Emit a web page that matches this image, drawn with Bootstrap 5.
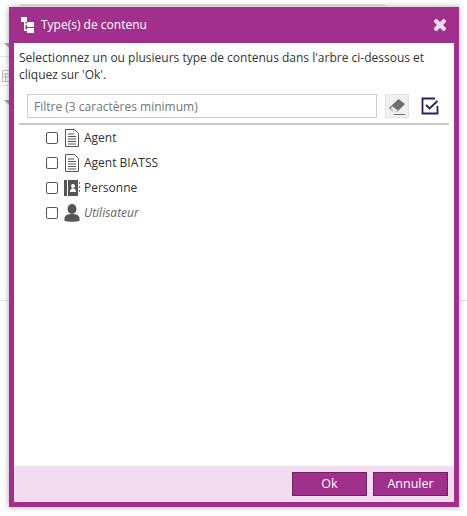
<!DOCTYPE html>
<html lang="fr">
<head>
  <meta charset="UTF-8" />
  <meta name="viewport" content="width=device-width, initial-scale=1.0" />
  <title>Type(s) de contenu</title>
  <link href="https://cdn.jsdelivr.net/npm/bootstrap@5.3.0/dist/css/bootstrap.min.css" rel="stylesheet" />
  <style>
    html, body { height: 100%; overflow: hidden; }
    body { background: #fff; font-family: "Open Sans", sans-serif; font-size: 12px; color: #333; position: relative; }
    .bg-line { position: absolute; background: #e8e8e8; }
    .bg-line.top { left: 20px; top: 4px; width: 365px; height: 2px; }
    .bg-line.mid-l { left: 0; top: 300px; width: 9px; height: 1px; background: #dfe6ea; }
    .bg-line.mid-r { right: 0; top: 300px; width: 8px; height: 1px; background: #dfe6ea; }
    .bg-line.row-a { left: 0; top: 56px; width: 9px; height: 1px; }
    .bg-line.row-b { left: 0; top: 85px; width: 9px; height: 1px; }
    .bg-tri { position: absolute; left: 4px; width: 0; height: 0; border-left: 5px solid transparent; border-top: 5px solid #aaa; }
    .bg-cal { position: absolute; left: 2px; top: 68px; }
    .dlg {
      position: absolute; left: 9px; top: 7px; width: 450px; height: 500px;
      background: #a1308c; box-shadow: 0 0 6px rgba(0,0,0,.35);
      padding: 0 5px 5px; display: flex; flex-direction: column;
    }
    .dlg-head { height: 36px; color: #fff; font-size: 12px; gap: 7px; padding-left: 7px; flex: none; }
    .dlg-close { margin-left: auto; margin-right: 8px; line-height: 0; }
    .dlg-body { flex: 1; background: #fff; padding: 6px 5px 0; min-height: 0; }
    .dlg-msg { line-height: 17px; margin: 0 0 11px; color: #333; font-size: 12px; padding-right: 10px; }
    .filter-row { padding: 0 0 5px 8px; border-bottom: 2px solid #c8c8c8; gap: 8px; }
    .filter-input { width: 350px; height: 24px; border: 1px solid #ccc; border-radius: 0; padding: 0 6px; font-size: 12px; box-shadow: none; }
    .filter-input::placeholder { color: #757575; opacity: 1; }
    .tool-btn { width: 24px; height: 24px; background: #f0f0f0; border: 1px solid #e3e3e3; border-radius: 0; padding: 0; }
    .tool-plain { width: 24px; height: 24px; margin-left: 1px; }
    .tree { list-style: none; margin: 0; padding: 0 0 0 27px; }
    .tree li { height: 25px; gap: 6px; font-size: 12px; }
    .tree-chk { width: 12px; height: 12px; border: 1.5px solid #555; border-radius: 2px; flex: none; margin: 0; appearance: none; background: #fff; }
    .tree-ic { width: 16px; height: 18px; flex: none; margin-right: -2px; }
    .tree-off { font-style: italic; color: #666; }
    .dlg-foot { height: 36px; background: #f4dcf0; flex: none; gap: 6px; padding-right: 6px; }
    .foot-btn { width: 75px; height: 24px; background: #a1308c; border: 1px solid #6f2260; border-radius: 0; color: #fff; font-size: 12.5px; padding: 0; }
  </style>
</head>
<body>
  <div class="bg-line top"></div>
  <div class="bg-line row-a"></div>
  <div class="bg-line row-b"></div>
  <div class="bg-line mid-l"></div>
  <div class="bg-line mid-r"></div>
  <div class="bg-tri" style="top:43px"></div>
  <div class="bg-tri" style="top:100px"></div>
  <svg class="bg-cal" width="8" height="14" viewBox="0 0 8 14"><path d="M.5 2.5h7v11h-7zM.5 6h7M.5 9h7M3.5 6v7.5" fill="none" stroke="#bbb"/></svg>

  <div class="dlg" role="dialog">
    <div class="dlg-head d-flex align-items-center">
      <svg width="13" height="17" viewBox="0 0 13 17"><path d="M0 0h6v5H0zM3 5h1.500v9H3zM4 6.500h2V8H4zM4 12.500h2V14H4zM6 5h7v5H6zM6 11h7v5H6z" fill="#fff"/></svg>
      <span>Type(s) de contenu</span>
      <svg class="dlg-close" width="12" height="12" viewBox="0 0 12 12"><path d="M2.200 2.200l7.600 7.600M9.800 2.200l-7.600 7.600" stroke="#f2dcee" stroke-width="4.200" stroke-linecap="round"/></svg>
    </div>
    <div class="dlg-body">
      <p class="dlg-msg">Selectionnez un ou plusieurs type de contenus dans l'arbre ci-dessous et cliquez sur 'Ok'.</p>
      <div class="filter-row d-flex align-items-center">
        <input class="form-control filter-input" type="text" placeholder="Filtre (3 caractères minimum)" />
        <button class="btn tool-btn d-flex align-items-center justify-content-center" type="button" title="Effacer">
          <svg width="18" height="19" viewBox="0 0 18 19"><path d="M1 11L10.500 2 17 7l-8 8H5z" fill="#707070"/><path d="M2.500 11.200L4.500 9.300 10 13.500 8.500 15H5z" fill="#e4e4e4"/><path d="M6 17.500h11" stroke="#707070"/></svg>
        </button>
        <button class="btn tool-plain p-0 d-flex align-items-center justify-content-center border-0" type="button" title="Tout cocher">
          <svg width="18" height="18" viewBox="0 0 18 18"><path d="M14 1.500H1.500v15h15V9" fill="none" stroke="#2b1a66" stroke-width="1.800"/><path d="M5 8l3.500 3.500L16.500 4" fill="none" stroke="#2b1a66" stroke-width="1.800"/></svg>
        </button>
      </div>
      <ul class="tree">
        <li class="d-flex align-items-center">
          <input class="tree-chk" type="checkbox" />
          <svg class="tree-ic" viewBox="0 0 16 18"><path d="M1.500 .5h9l4 4v13h-13z" fill="#fff" stroke="#555"/><path d="M4 5h6M4 7.500h8M4 10h8M4 12.500h8M4 15h8" stroke="#555"/></svg>
          <span>Agent</span>
        </li>
        <li class="d-flex align-items-center">
          <input class="tree-chk" type="checkbox" />
          <svg class="tree-ic" viewBox="0 0 16 18"><path d="M1.500 .5h9l4 4v13h-13z" fill="#fff" stroke="#555"/><path d="M4 5h6M4 7.500h8M4 10h8M4 12.500h8M4 15h8" stroke="#555"/></svg>
          <span>Agent BIATSS</span>
        </li>
        <li class="d-flex align-items-center">
          <input class="tree-chk" type="checkbox" />
          <svg class="tree-ic" viewBox="0 0 16 18"><path d="M0 1h3v16H0zM4 1h10v16H4z" fill="#555"/><circle cx="9" cy="7" r="2" fill="#fff"/><path d="M6 13c0-5 6-5 6 0z" fill="#fff"/><path d="M15.500 3v2M15.500 7v2M15.500 11v2" stroke="#777"/></svg>
          <span>Personne</span>
        </li>
        <li class="d-flex align-items-center">
          <input class="tree-chk" type="checkbox" />
          <svg class="tree-ic" viewBox="0 0 16 18"><ellipse cx="8" cy="5" rx="4.500" ry="5" fill="#555"/><path d="M.5 17v-3c0-5.500 15-5.500 15 0v3c-3 1-12 1-15 0z" fill="#555"/></svg>
          <span class="tree-off">Utilisateur</span>
        </li>
      </ul>
    </div>
    <div class="dlg-foot d-flex align-items-center justify-content-end">
      <button class="btn foot-btn" type="button">Ok</button>
      <button class="btn foot-btn" type="button">Annuler</button>
    </div>
  </div>
</body>
</html>
